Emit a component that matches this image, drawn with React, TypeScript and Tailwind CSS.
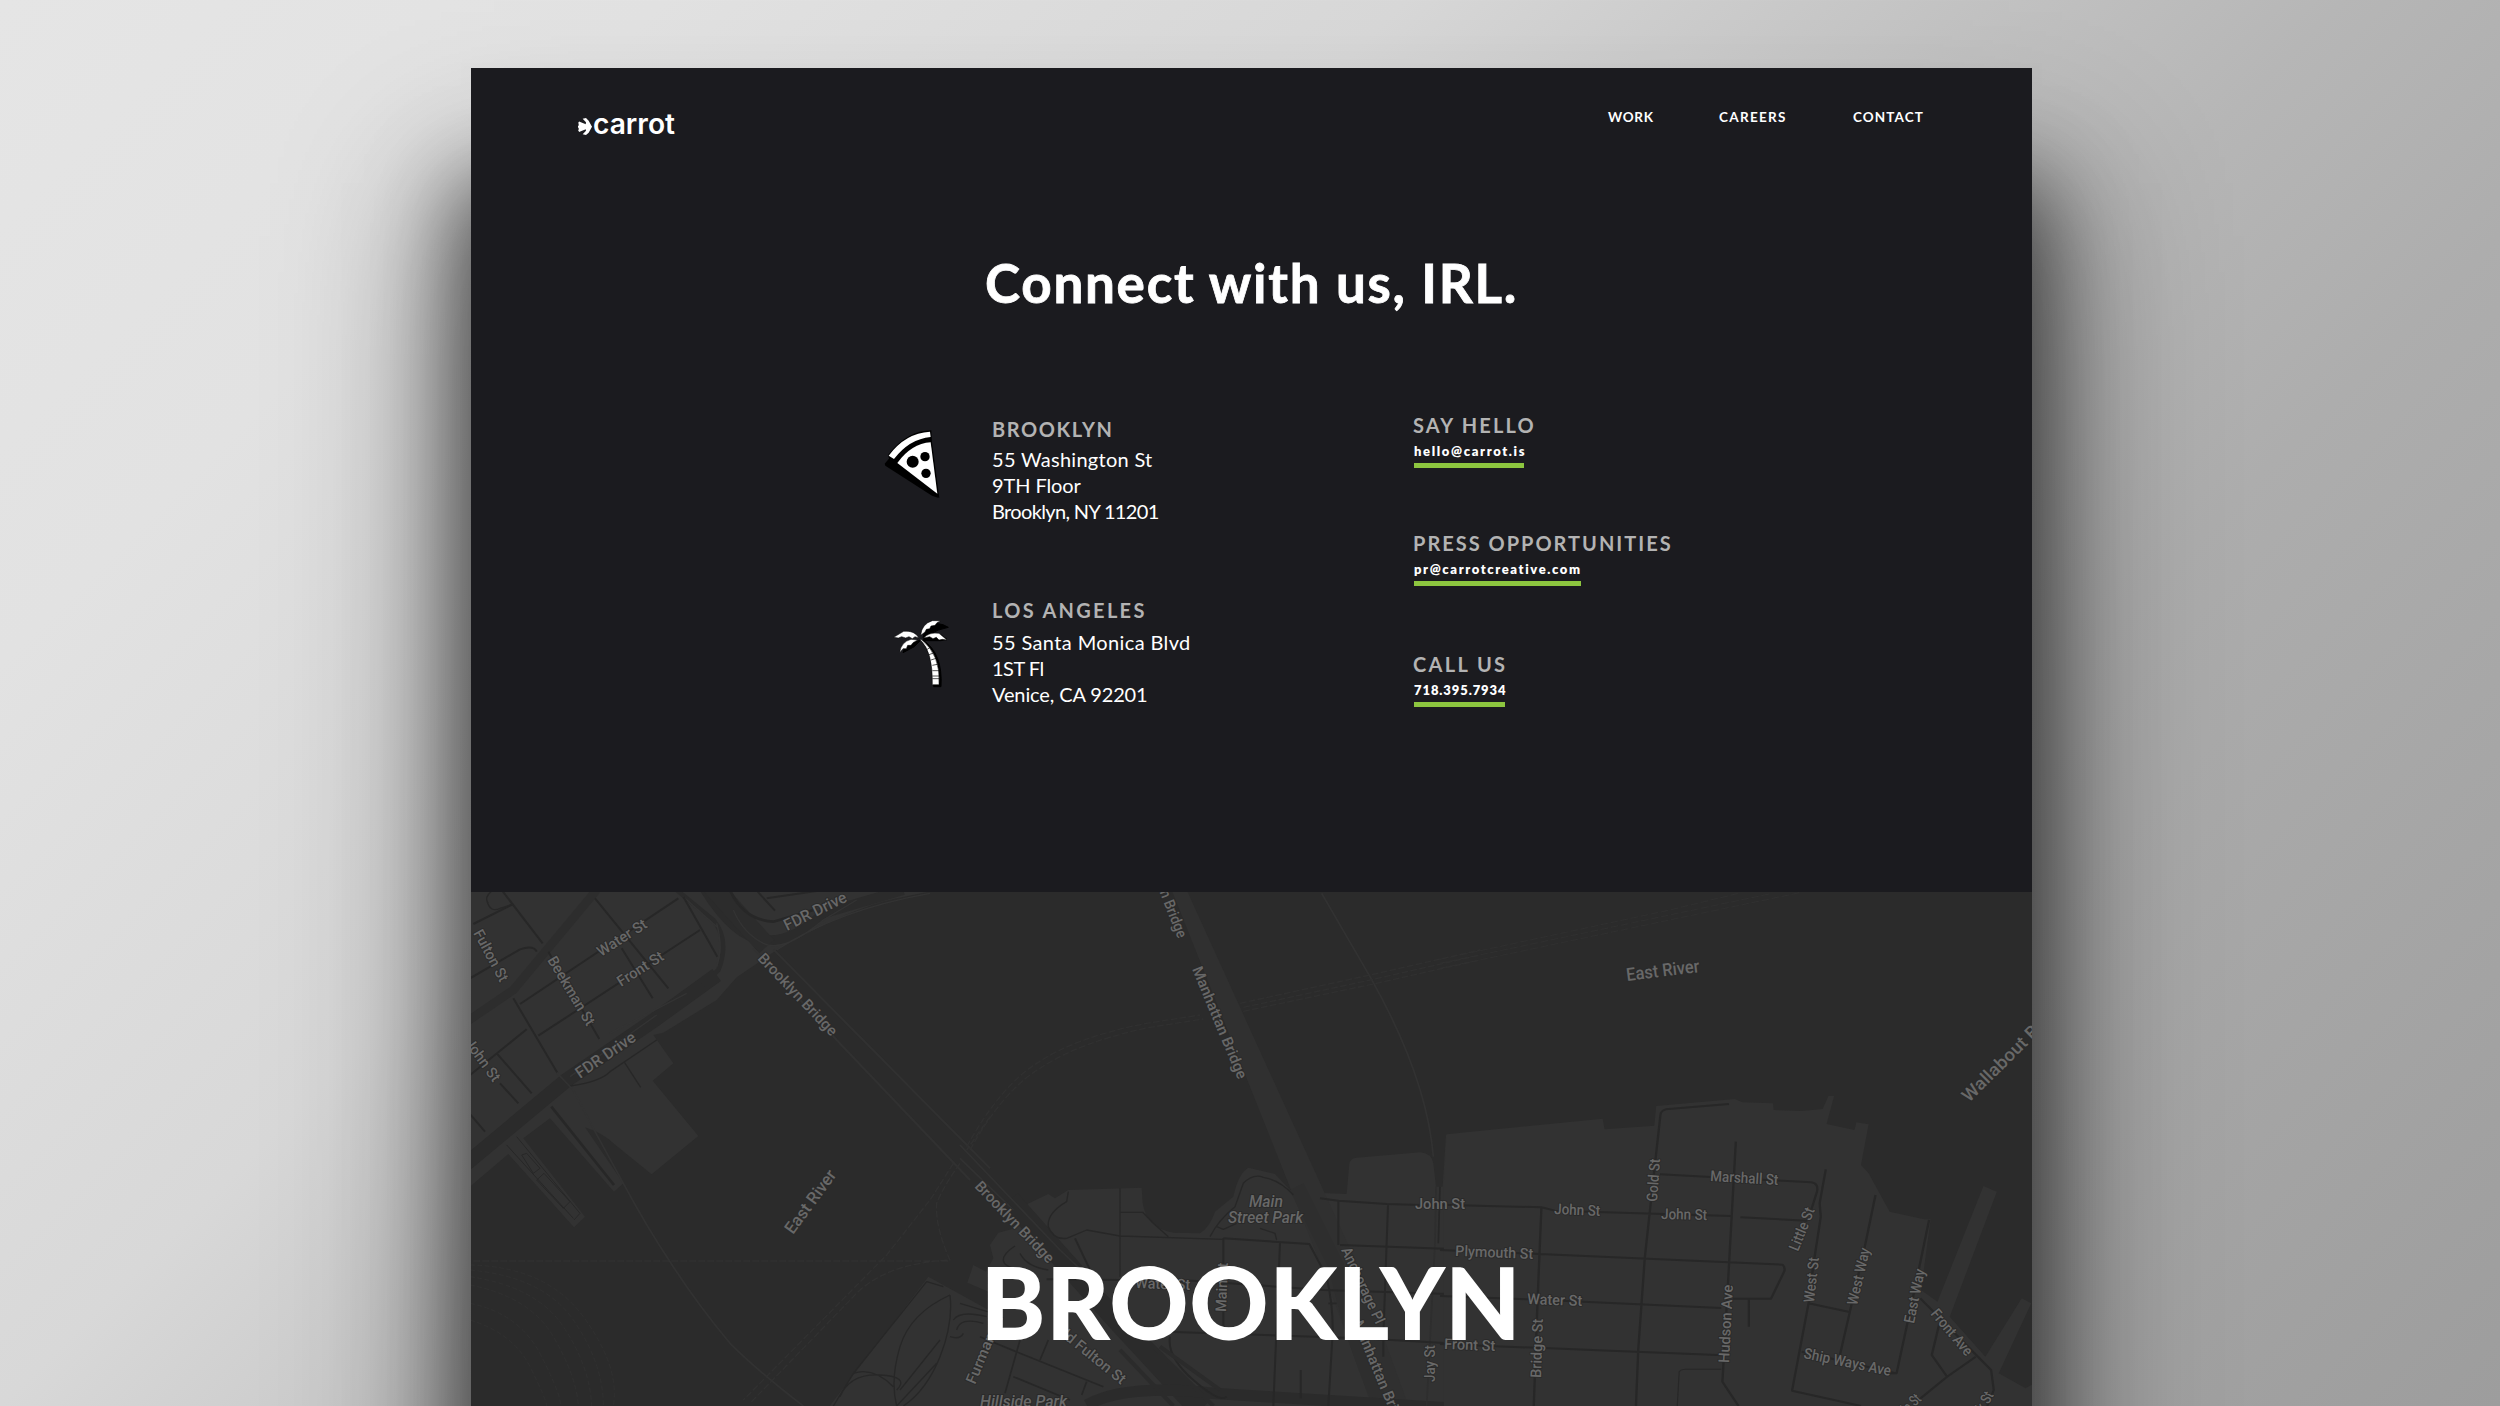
import React from "react";

type Pt = [number, number];

const WATER = "#2b2b2b";
const LAND = "#323232";
const ROAD = "#272727";

/** Street label that runs from one baseline point to another. */
function Label({ t, a, b, size = 15, italic }: { t: string; a: Pt; b: Pt; size?: number; italic?: boolean }) {
  const dx = b[0] - a[0];
  const dy = b[1] - a[1];
  const len = Math.hypot(dx, dy);
  const rot = (Math.atan2(dy, dx) * 180) / Math.PI;
  return (
    <text
      transform={`translate(${a[0]} ${a[1]}) rotate(${rot})`}
      textLength={len}
      lengthAdjust="spacingAndGlyphs"
      fontSize={size}
      fontStyle={italic ? "italic" : undefined}
      fill="#686868"
      stroke="#2a2a2a"
      strokeWidth={size / 8}
      strokeLinejoin="round"
      paintOrder="stroke"
    >
      {t}
    </text>
  );
}

function Streets({ d, w = 2, c = ROAD, dash }: { d: string; w?: number; c?: string; dash?: string }) {
  return <path d={d} fill="none" stroke={c} strokeWidth={w} strokeLinejoin="round" strokeDasharray={dash} />;
}

function BrooklynMap() {
  return (
    <svg className="block h-full w-full font-['Roboto',sans-serif] font-medium" viewBox="471 892 1561 514" preserveAspectRatio="none">
      <rect x="471" y="892" width="1561" height="514" fill={WATER} />

      {/* Manhattan */}
      <g transform="translate(470 890) scale(.33333)">
        <path
          fill={LAND}
          d="M0 0H1400L1280 25Q1150 50 920 180L800 262L740 330L580 428L550 435L610 520L548 572L685 738L545 853L430 760Q400 730 345 712L460 880L432 905L240 685L160 745L345 980L312 1012L115 792L0 890Z"
        />
        <Streets c={WATER} w={44} d="M-10 820L290 570L560 385L740 255" />
        <Streets c="#2d2d2d" w={26} d="M-10 395L130 300L380 0" />
        <Streets c={WATER} w={14} d="M620 0L730 90Q780 150 745 240L700 285" />
        <Streets c={WATER} w={30} d="M700 -10Q790 140 880 150T1060 70L1300 0" />
        <Streets c="#2c2c2c" w={60} d="M720 -20L890 170" />
        <Streets c={ROAD} w={8} d="M780 0Q820 90 910 95L1030 60" />
        <Streets c="#333333" w={4} d="M740 100Q760 170 740 230M790 60Q820 130 880 160T1060 90L1160 30M420 430L650 310M300 560L560 375M640 20L740 110M920 180Q1100 60 1380 10" />
        <Streets w={6} d="M10 102L130 42M0 265L150 178Q190 165 200 185M150 342L625 25M205 437L690 120M375 25L595 295M455 175L548 325M640 20L742 200M235 185L388 447M130 325L262 548M95 0L218 160M0 555L170 418M80 490L185 610M90 580L145 640M0 672L45 725M863 5L915 62M890 25L1060 0" />
        <Streets w={4} d="M50 30Q60 70 90 55L130 42M70 0Q40 20 55 40M300 588Q390 575 420 545L560 450M462 515L512 592" />
        <Streets w={8} d="M244 650L432 885" />
        <Streets w={3} d="M110 765L310 985M140 740L330 970L312 990M155 795L170 790L210 835L190 850ZM200 870L222 850L300 935L280 955Z" />
        <Streets c="#323232" w={5} d="M260 548L310 600L370 715L460 880Q530 1010 600 1115Q680 1240 780 1360Q860 1440 1000 1548" />
        <Streets c="#313131" w={6} d="M910 178L1560 835M850 175L1100 450L1500 870" />
        <Streets c="#313131" w={4} dash="20 7" d="M10 1113H1440M1560 680L1490 780M1450 820Q1400 900 1380 930L1250 1095L820 1530M1470 820Q1420 890 1400 940Q1395 1010 1440 1110Q1240 1120 1150 1220L840 1540" />
        <Streets c="#303030" w={3} dash="14 8" d="M0 1125Q230 1130 340 1280T430 1548M0 1140Q220 1160 310 1290T400 1548M0 1160Q200 1190 280 1310T365 1548M0 1185Q180 1220 250 1340T325 1548M0 1240Q150 1270 215 1400T270 1548M0 1290Q130 1330 180 1430T230 1548" />
      </g>

      {/* Dumbo and the two bridge landings */}
      <g transform="translate(960 890) scale(.33333)">
        <path
          fill={LAND}
          d="M185 950L265 912L285 925L325 900L545 893L548 940Q560 1015 640 1028L720 1030Q750 1010 765 965L820 920Q835 850 865 833L945 852L990 900L1070 908L1160 912L1168 820Q1172 805 1190 803L1380 787Q1415 790 1420 820L1428 890H1448L1458 735L1600 720V1560H-400L-95 1160L90 1262L85 1205L22 1178L40 1125L78 1145L100 1105L90 1065L115 1028L165 1015Z"
        />
        <path fill="#303030" d="M635 0H680L1190 1120L1350 1560H1240L1085 1130Z" />
        <Streets c={WATER} w={62} d="M150 930L470 1290L720 1560" />
        <Streets c="#2e2e2e" w={46} d="M1010 890L1130 1130Q1170 1330 1270 1560" />
        <Streets c={WATER} w={34} d="M380 1545Q500 1480 760 1510L1560 1560" />
        <Streets c="#323232" w={5} d="M0 765L300 1080L480 1250L760 1548M0 805L160 960M1085 10L1230 260Q1400 560 1420 800" />
        <Streets c="#2e2e2e" w={5} d="M1428 890L1425 1060L1400 1548" />
        <Streets c="#303030" w={4} dash="20 7" d="M20 770Q120 590 230 520Q350 440 560 400L720 375M840 340L1230 255L1560 180M30 780Q130 600 240 535Q360 455 570 412L730 387M850 352L1240 268L1560 195M850 364L1240 282L1560 210" />
        <Streets w={6} d="M1560 950L1280 942L1135 932L1080 925M1135 932V1065M1284 945L1270 1340M345 1045L395 1150M790 1045L1048 1062L1100 1160Q1120 1250 1118 1330L1105 1548M790 1045V1330M960 1060L940 1548M1140 1065L1560 1080M260 1168L700 1172L1090 1200L1560 1215M620 1325L1200 1345L1560 1365M630 1340Q620 1400 700 1470T800 1520M1022 1440V1525M1270 1340V1400" />
        <Streets w={5} d="M180 1350L135 1510M265 1350L240 1410M60 1340L180 1390L430 1490M160 1460L330 1530M380 1475L365 1515M1105 1240H1130M1440 890L1435 1060" />
        <Streets w={12} d="M480 1380L640 1548M560 1350L760 1548M600 1370L780 1500" c={WATER} />
        <Streets w={4} d="M480 895V1160M480 967H548L580 1000L625 1040M325 905L320 935Q260 970 265 1010Q280 1050 320 1045L380 1020L480 1038L790 1048M750 1040Q775 990 825 950L850 880Q880 850 910 862Q960 870 1000 915M770 1010L790 1018L830 1000M900 1015L945 1030L950 1050M265 1140Q200 1130 180 1090M165 1068Q130 1090 130 1110T180 1140" />
        <Streets w={4} d="M-50 1190L-100 1175L-320 1450L-380 1548M-30 1215Q-150 1270 -180 1370T-190 1548M-30 1215Q-20 1300 -60 1400T-170 1548M-320 1450Q-260 1430 -200 1490M-360 1520Q-330 1450 -240 1455T-190 1500M-30 1340Q0 1350 10 1330M-20 1290Q0 1260 80 1280M-10 1320Q0 1280 70 1300M-60 1350L-180 1500M-70 1420L-190 1548M0 1240L100 1270" />
      </g>

      {/* Vinegar Hill and the Navy Yard */}
      <g transform="translate(1440 890) scale(.3827 .33333)">
        <path
          fill={LAND}
          d="M10 880L17 733L425 686L430 718L560 707L565 648L770 627L790 637L870 640L872 660L945 663L1000 657L1015 618H1030L1010 702L1083 720L1088 697L1120 703L1100 825L1120 850L1175 965L1265 988H1282L1257 1200L1300 1235L1420 888L1455 905L1332 1280L1425 1400L1520 1225L1545 1240L1460 1450L1530 1495L1560 1475V1560H10Z"
        />
        <Streets w={6} d="M0 944L265 952L300 962L760 978M785 982L960 992M265 952L255 1230L245 1548M0 1080L260 1092L895 1124Q905 1135 897 1150L865 1226H765M807 1226V1310M0 1218L230 1228L735 1254M0 1362L740 1396M755 642L590 658Q577 662 576 675L560 840L535 1105L518 1380L512 1548M575 853L970 877Q990 880 985 905L970 960M773 755L752 1190L738 1475L780 1548M1008 838L992 940L995 980L975 1130L963 1240L920 1502L1100 1548M963 1240L1070 1266M1138 915L1110 1070L1070 1270L1045 1395M1278 990L1240 1200L1193 1450H1170M945 1385L1190 1450M1255 1225L1440 1440L1447 1500L1430 1548M1305 1300L1285 1395L1325 1460L1240 1540M1325 1460L1400 1400" />
        <Streets w={3} d="M620 1548L625 1445Q630 1438 640 1438H735" />
        <Streets c="#303030" w={3} dash="20 7" d="M0 208L600 60L780 10M0 220L620 70L860 12M0 235L620 85L940 8" />
      </g>

      {/* Labels */}
      <Label t="Fulton St" a={[473, 933]} b={[500, 983]} />
      <Label t="Beekman St" a={[547, 960]} b={[587, 1027]} />
      <Label t="Water St" a={[601, 957]} b={[648, 927]} />
      <Label t="Front St" a={[621, 987]} b={[665, 959]} />
      <Label t="FDR Drive" a={[787, 931]} b={[848, 901]} size={16} />
      <Label t="FDR Drive" a={[580, 1079]} b={[637, 1040]} size={16} />
      <Label t="John St" a={[464, 1043]} b={[493, 1083]} />
      <Label t="Brooklyn Bridge" a={[757, 959]} b={[831, 1037]} />
      <Label t="East River" a={[793, 1235]} b={[837, 1175]} size={17} />
      <Label t="Brooklyn Bridge" a={[974, 1187]} b={[1048, 1264]} />
      <Label t="Manhattan Bridge" a={[1138, 838]} b={[1178, 939]} />
      <Label t="Manhattan Bridge" a={[1192, 969]} b={[1238, 1080]} />
      <Label t="Main" a={[1249, 1207]} b={[1283, 1207]} size={16} italic />
      <Label t="Street Park" a={[1228, 1223]} b={[1303, 1223]} size={16} italic />
      <Label t="Water St" a={[1135, 1288]} b={[1190, 1290]} />
      <Label t="Main St" a={[1226, 1312]} b={[1228, 1263]} />
      <Label t="Anchorage Pl" a={[1341, 1250]} b={[1376, 1325]} />
      <Label t="Manhattan Bridge" a={[1353, 1323]} b={[1399, 1434]} />
      <Label t="Old Fulton St" a={[1053, 1330]} b={[1121, 1385]} />
      <Label t="Furman St" a={[975, 1385]} b={[1003, 1318]} />
      <Label t="Hillside Park" a={[980, 1407]} b={[1067, 1407]} size={16} italic />
      <Label t="John St" a={[1415, 1209]} b={[1465, 1209]} />
      <Label t="Plymouth St" a={[1455, 1256]} b={[1533, 1259]} />
      <Label t="Front St" a={[1444, 1349]} b={[1495, 1351]} />
      <Label t="Jay St" a={[1435, 1382]} b={[1435, 1345]} />
      <Label t="East River" a={[1627, 981]} b={[1700, 972]} size={18} />
      <Label t="Wallabout Bay" a={[1969, 1103]} b={[2054, 1019]} size={18} />
      <Label t="Gold St" a={[1657, 1202]} b={[1660, 1159]} />
      <Label t="Marshall St" a={[1710, 1181]} b={[1778, 1185]} />
      <Label t="John St" a={[1554, 1214]} b={[1600, 1216]} />
      <Label t="John St" a={[1661, 1219]} b={[1707, 1220]} />
      <Label t="Little St" a={[1798, 1252]} b={[1815, 1210]} />
      <Label t="West St" a={[1814, 1303]} b={[1819, 1258]} />
      <Label t="West Way" a={[1857, 1306]} b={[1870, 1249]} />
      <Label t="East Way" a={[1914, 1324]} b={[1925, 1270]} />
      <Label t="Front Ave" a={[1930, 1314]} b={[1966, 1357]} />
      <Label t="Water St" a={[1527, 1304]} b={[1582, 1306]} />
      <Label t="Bridge St" a={[1541, 1378]} b={[1543, 1319]} />
      <Label t="Hudson Ave" a={[1729, 1363]} b={[1733, 1285]} />
      <Label t="Ship Ways Ave" a={[1803, 1358]} b={[1890, 1376]} />
      <Label t="Little St" a={[1896, 1425]} b={[1922, 1400]} />
      <Label t="York St" a={[1975, 1428]} b={[1994, 1395]} />
    </svg>
  );
}

function CarrotLogo() {
  return (
    <a className="flex h-6 items-end">
      <svg className="h-[17px] w-[15px]" viewBox="0 0 45 51" fill="#fff" stroke="#fff">
        <path stroke="none" d="M14 2L24 0L32 8L42 26L32 44L24 51L14 49L24 38L22 26L24 13Z" />
        <path strokeWidth="6" d="M0 26H36M2 13L34 26L2 39" />
      </svg>
      <svg className="h-6 w-[83px] overflow-visible" viewBox="0 0 83 24">
        <text x="0" y="22.500" fill="#fff" fontSize="28" className="font-['Inter',sans-serif] font-semibold" textLength="82" lengthAdjust="spacingAndGlyphs">
          carrot
        </text>
      </svg>
    </a>
  );
}

function PizzaIcon() {
  return (
    <svg className="h-[70px] w-[58px]" viewBox="0 0 174 210">
      <path fill="#000" d="M8 104L22 88L60 112L145 170L170 207L150 200L10 110Z" />
      <path fill="#000" d="M18 78Q75 4 148 4L150 40L172 207L26 104Z" />
      <path fill="#fff" d="M20 80Q70 12 144 8L146 24Q82 30 36 90Z" />
      <path fill="#fff" d="M46 102Q88 44 146 40L166 194Z" />
      <circle cx="92" cy="98" r="18" fill="#000" />
      <circle cx="129" cy="83" r="14" fill="#000" />
      <circle cx="132" cy="133" r="14" fill="#000" />
    </svg>
  );
}

function PalmIcon() {
  return (
    <svg className="h-[70px] w-[58px] overflow-visible" viewBox="0 0 174 210">
      <g fill="#000" stroke="#000" strokeWidth="3" transform="translate(6 6)">
        <path d="M96 53Q100 20 135 10L156 14L172 22Q140 28 118 42Z" />
        <path d="M98 62L150 62L168 58L152 46Q122 36 98 56Z" />
        <path d="M36 98Q42 66 90 60L70 80Z" />
        <path d="M94 64Q136 90 128 200H150Q156 100 96 60Z" />
      </g>
      <g fill="#fff" stroke="#000" strokeWidth="1.500">
        <path d="M95 52Q98 18 130 8L155 8L144 14L138 22L126 24L122 32L112 34L108 42Z" />
        <path d="M90 60Q76 36 44 40L14 58L28 60L38 56L50 60L60 56L70 62L78 56Z" />
        <path d="M32 104Q36 72 66 64L86 66L72 74L66 82L56 82L52 92L42 92Z" />
        <path d="M104 60Q120 42 150 46L174 66L160 64L150 66L142 58L132 62L122 56Z" />
        <path d="M94 66Q132 100 130 200H150Q156 110 96 64Z" />
      </g>
      <path stroke="#000" strokeWidth="2" fill="none" d="M112 96L126 86M120 110L136 104M126 126L144 120M130 142L150 138M130 158H152M130 174H152M130 182H152" />
    </svg>
  );
}

function NavItem({ children, className }: { children: React.ReactNode; className: string }) {
  return <a className={`block text-[13.5px] leading-5 font-bold text-white ${className}`}>{children}</a>;
}

function Heading({ children, className }: { children: React.ReactNode; className: string }) {
  return <h2 className={`text-[20px] leading-6 font-bold text-[#b3b3b3] whitespace-nowrap ${className}`}>{children}</h2>;
}

function Contact({ title, value, titleClass, valueClass, barClass }: { title: string; value: string; titleClass: string; valueClass: string; barClass: string }) {
  return (
    <div>
      <Heading className={titleClass}>{title}</Heading>
      <a className={`mt-1 ml-px block text-[13px] leading-5 font-extrabold whitespace-nowrap text-white ${valueClass}`}>{value}</a>
      <div className={`mt-[2px] ml-px h-[5px] bg-[#8dc63f] ${barClass}`} />
    </div>
  );
}

export default function App() {
  return (
    <div className="h-[1406px] w-[2500px] overflow-hidden bg-[linear-gradient(135deg,#e5e5e5_0%,#e2e2e2_17%,#d8d8d8_36%,#c2c2c2_51%,#b6b6b6_60%,#adadad_70%,#9d9d9d_100%)] pt-[68px] pl-[471px] font-['Lato',sans-serif]">
      <main className="flex h-[1500px] w-[1561px] flex-col bg-[#1b1b1f] shadow-[0_125px_80px_10px_rgba(0,0,0,0.52),0_145px_150px_30px_rgba(0,0,0,0.42)]">
        <section className="h-[824px] shrink-0">
          <header className="flex h-[67px] items-start justify-between pt-[39px] pr-[105px] pl-[107px]">
            <div className="pt-1">
              <CarrotLogo />
            </div>
            <nav className="flex">
              <NavItem className="w-[111px] tracking-[0.700px]">WORK</NavItem>
              <NavItem className="w-[134px] tracking-[1.300px]">CAREERS</NavItem>
              <NavItem className="w-[74px] tracking-[1.100px]">CONTACT</NavItem>
            </nav>
          </header>

          <h1 className="mt-[116px] ml-[514px] text-[53px] leading-[64px] font-bold tracking-[1.720px] whitespace-nowrap text-white [-webkit-text-stroke:0.8px_white]">
            Connect with us, IRL.
          </h1>

          <div className="mt-[93px] flex">
            <div className="ml-[411px] w-[531px]">
              <div className="mt-[9px] flex h-[181px]">
                <div className="w-[110px] pt-3">
                  <PizzaIcon />
                </div>
                <div>
                  <Heading className="tracking-[1.600px]">BROOKLYN</Heading>
                  <address className="mt-[5px] text-[20px] leading-[26px] whitespace-nowrap text-white not-italic">
                    <p className="tracking-[0.280px]">55 Washington St</p>
                    <p className="tracking-[-0.100px]">9TH Floor</p>
                    <p className="tracking-[-0.650px]">Brooklyn, NY 11201</p>
                  </address>
                </div>
              </div>
              <div className="flex">
                <div className="w-[110px] pt-[20px] pl-[7px]">
                  <PalmIcon />
                </div>
                <div>
                  <Heading className="tracking-[2.300px]">LOS ANGELES</Heading>
                  <address className="mt-[7px] text-[20px] leading-[26px] whitespace-nowrap text-white not-italic">
                    <p className="tracking-[0.380px]">55 Santa Monica Blvd</p>
                    <p className="tracking-[-0.500px]">1ST Fl</p>
                    <p className="tracking-[-0.120px]">Venice, CA 92201</p>
                  </address>
                </div>
              </div>
            </div>
            <div className="flex flex-col gap-[63px] pt-[5px]">
              <Contact title="SAY HELLO" value="hello@carrot.is" titleClass="tracking-[2.150px]" valueClass="tracking-[1.650px]" barClass="w-[110px]" />
              <Contact title="PRESS OPPORTUNITIES" value="pr@carrotcreative.com" titleClass="tracking-[2px]" valueClass="tracking-[1.620px]" barClass="w-[167px]" />
              <div className="pt-[3px]">
                <Contact title="CALL US" value="718.395.7934" titleClass="tracking-[2.350px]" valueClass="tracking-[0.900px]" barClass="w-[91px]" />
              </div>
            </div>
          </div>
        </section>

        <section className="relative h-[514px] shrink-0">
          <BrooklynMap />
          <div className="absolute top-[352px] left-[510px] text-[97px] leading-[116px] font-bold tracking-[1.700px] whitespace-nowrap text-white [-webkit-text-stroke:1.8px_white]">BROOKLYN</div>
        </section>
      </main>
    </div>
  );
}
